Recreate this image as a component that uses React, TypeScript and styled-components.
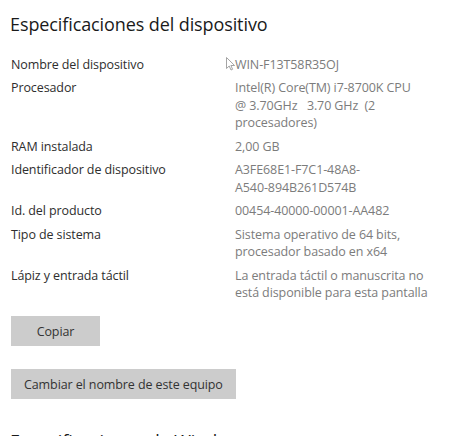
import React from "react";
import styled, { createGlobalStyle } from "styled-components";

const Global = createGlobalStyle`
  html, body { margin: 0; padding: 0; background: #ffffff; }
  body { font-family: "Open Sans", "Noto Sans", sans-serif; -webkit-font-smoothing: antialiased; }
`;

const Page = styled.div`
  width: 464px;
  height: 436px;
  overflow: hidden;
  box-sizing: border-box;
  padding: 9.5px 0 0 11px;
  display: flex;
  flex-direction: column;
  align-items: flex-start;
  & > * { flex-shrink: 0; }
`;

const Heading = styled.h2`
  margin: 0 0 0 -1px;
  font-size: 18px;
  line-height: 28px;
  font-weight: 400;
  color: #1a1a1a;
  letter-spacing: -0.1px;
`;

const SpecGrid = styled.dl`
  margin: 18px 0 0 0;
  display: grid;
  grid-template-columns: 224px 210px;
  row-gap: 6px;
  font-size: 12.5px;
  line-height: 17.5px;
  letter-spacing: -0.1px;
`;

const Label = styled.dt`
  margin: 0;
  color: #2e2e2e;
`;

const Value = styled.dd`
  margin: 0;
  color: #7c7c7c;
  white-space: pre-wrap;
  position: relative;
`;

const Cursor = styled.svg`
  position: absolute;
  left: -9px;
  top: 1px;
  width: 10px;
  height: 14px;
`;

const Button = styled.button<{ $wide?: boolean }>`
  font-family: inherit;
  font-size: 12.5px;
  line-height: 17px;
  letter-spacing: -0.1px;
  color: #333333;
  background: #cccccc;
  border: none;
  box-sizing: border-box;
  height: 30px;
  padding: 0 13px;
  min-width: 89px;
  margin-top: ${(p) => (p.$wide ? "23px" : "14.5px")};
`;

const SubHeading = styled(Heading)`
  margin-top: 28px;
`;

const specs: { label: string; value: string; cursor?: boolean }[] = [
  { label: "Nombre del dispositivo", value: "WIN-F13T58R35OJ", cursor: true },
  {
    label: "Procesador",
    value: "Intel(R) Core(TM) i7-8700K CPU\n@ 3.70GHz   3.70 GHz  (2\nprocesadores)",
  },
  { label: "RAM instalada", value: "2,00 GB" },
  { label: "Identificador de dispositivo", value: "A3FE68E1-F7C1-48A8-\nA540-894B261D574B" },
  { label: "Id. del producto", value: "00454-40000-00001-AA482" },
  { label: "Tipo de sistema", value: "Sistema operativo de 64 bits,\nprocesador basado en x64" },
  {
    label: "Lápiz y entrada táctil",
    value: "La entrada táctil o manuscrita no\nestá disponible para esta pantalla",
  },
];

export default function App() {
  return (
    <>
      <Global />
      <Page>
        <Heading>Especificaciones del dispositivo</Heading>
        <SpecGrid>
          {specs.map((s) => (
            <React.Fragment key={s.label}>
              <Label>{s.label}</Label>
              <Value>
                {s.cursor && (
                  <Cursor viewBox="0 0 10 14">
                    <path
                      d="M0.5 0.5 L0.5 11.5 L3.2 9 L5 13 L6.6 12.3 L4.9 8.5 L8.6 8.5 Z"
                      fill="#ffffff"
                      stroke="#9a9a9a"
                      strokeWidth="0.9"
                      strokeLinejoin="round"
                    />
                  </Cursor>
                )}
                {s.value}
              </Value>
            </React.Fragment>
          ))}
        </SpecGrid>
        <Button>Copiar</Button>
        <Button $wide>Cambiar el nombre de este equipo</Button>
        <SubHeading>Especificaciones de Windows</SubHeading>
      </Page>
    </>
  );
}
